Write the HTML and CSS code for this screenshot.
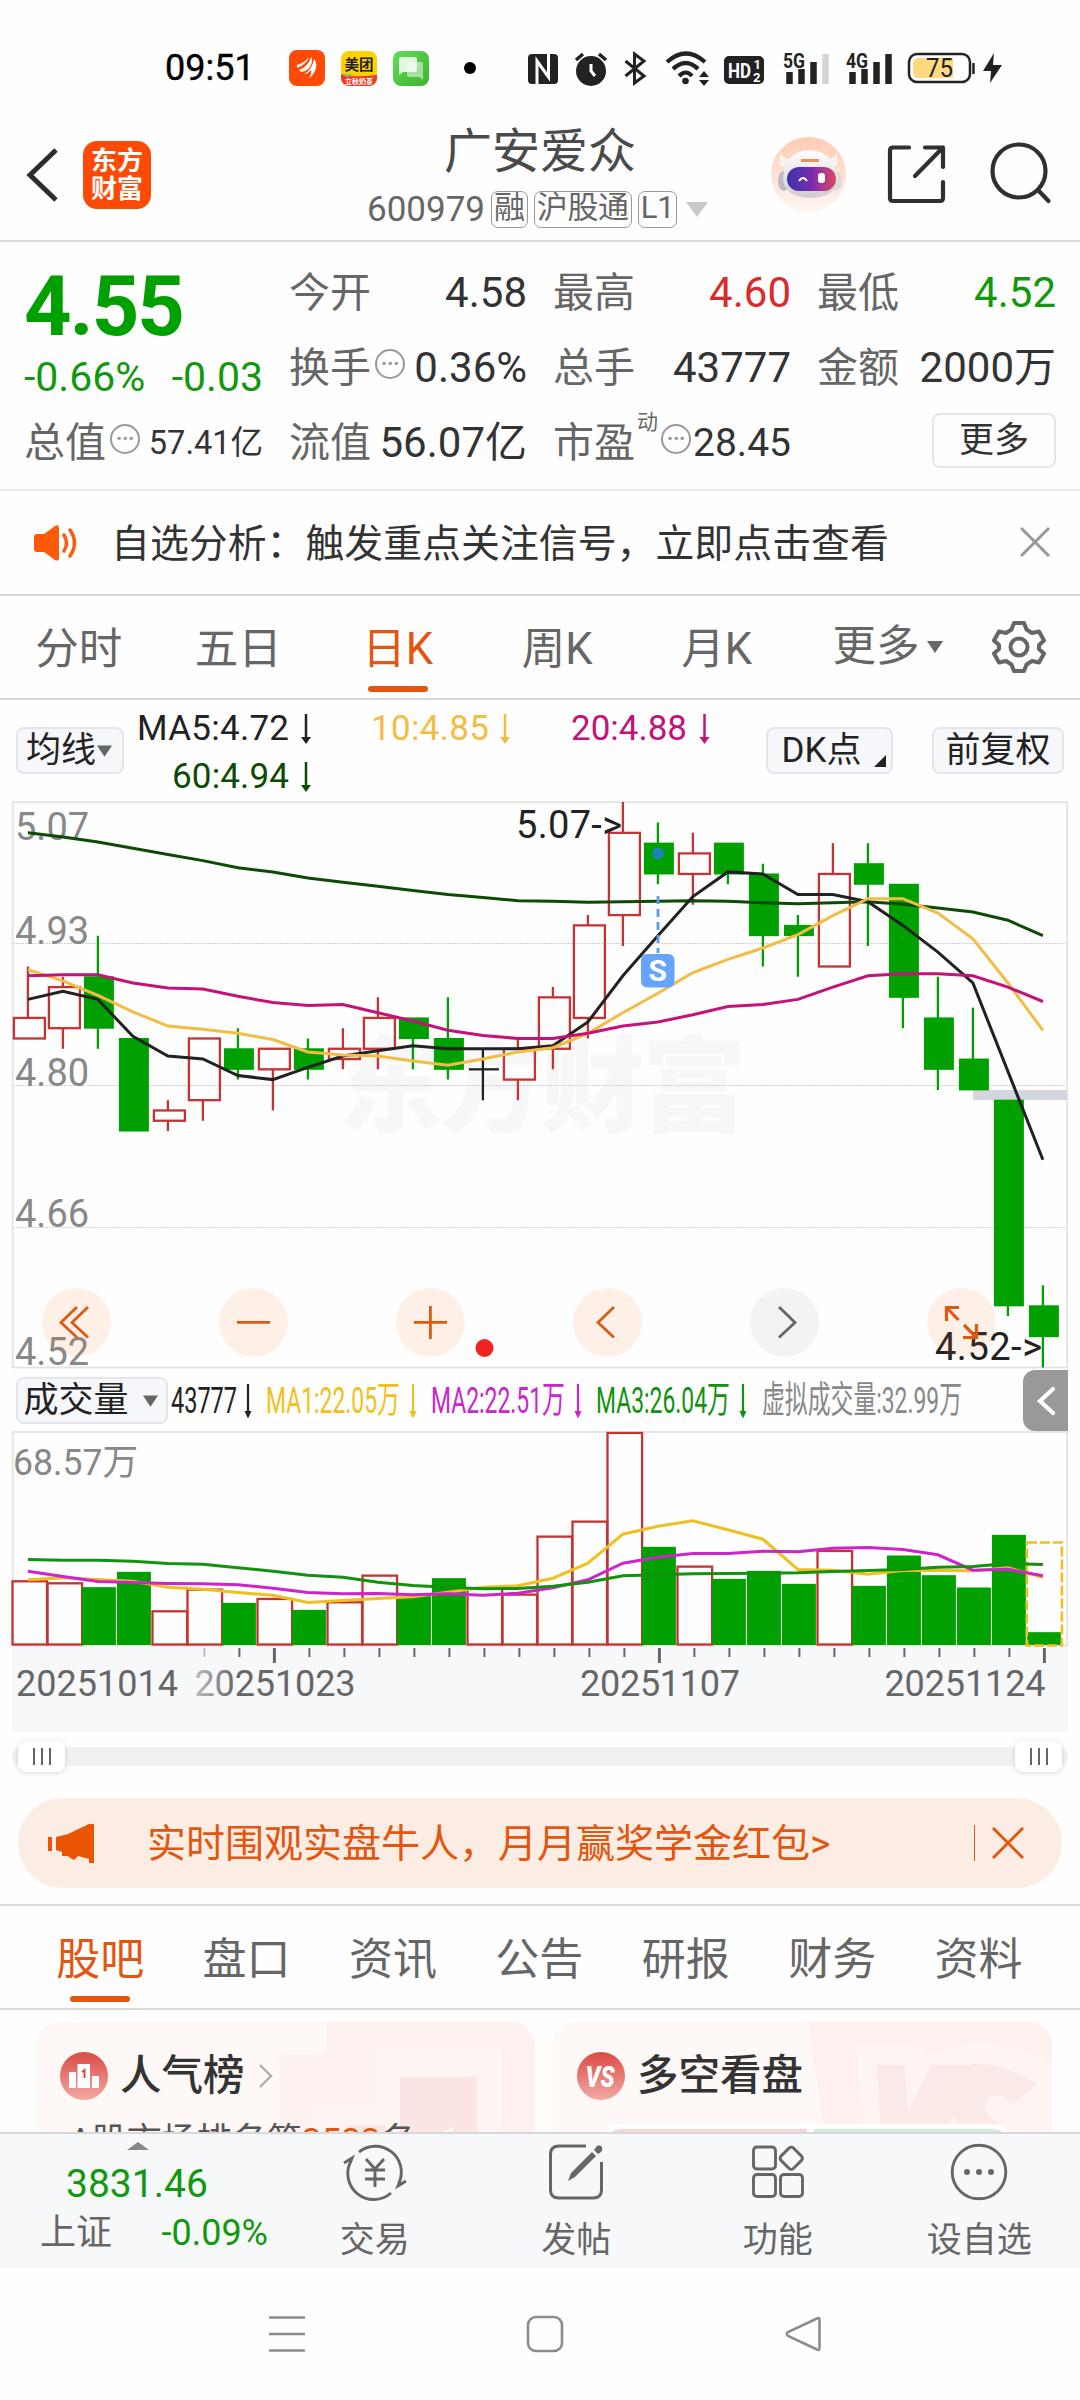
FILE: index.html
```html
<!DOCTYPE html>
<html lang="zh-CN">
<head>
<meta charset="utf-8">
<title>广安爱众 600979</title>
<link rel="stylesheet" href="styles.css">
</head>
<body>
<div class="phone">

<header class="status">
  <span class="clock">09:51</span>
  <svg class="app" viewBox="0 0 36 36"><rect width="36" height="36" rx="8" fill="#ff4a05"/><path d="M8 15Q15 13 20 7Q18 14 8 18ZM10 20Q19 17 22 7Q24 10 22 15Q19 21 12 22ZM15 24Q23 20 25 9Q29 14 26 21Q23 27 20 28Q23 23 22 20Q19 24 15 24Z" fill="#fff"/></svg>
  <svg class="app" viewBox="0 0 36 36"><defs><clipPath id="mt"><rect y="1" width="36" height="35" rx="8"/></clipPath></defs><g clip-path="url(#mt)"><rect width="36" height="36" fill="#ffd100"/><path d="M0 24Q10 28 36 25V36H0Z" fill="#ee3a2a"/><path d="M0 24L14 24L6 27Z" fill="#8fc06a"/></g><text x="18" y="20" class="mt-name">美团</text><text x="18" y="34" class="mt-sub">立秋奶茶</text></svg>
  <svg class="app" viewBox="0 0 36 36"><defs><linearGradient id="msg" x2="1" y2="1"><stop stop-color="#62dc5a"/><stop offset="1" stop-color="#3db22c"/></linearGradient></defs><rect y="1" width="36" height="35" rx="8" fill="url(#msg)"/><path d="M16 12H28Q30 12 30 14V30L26 27H16Q14 27 14 25V14Q14 12 16 12Z" fill="#fff" opacity=".5"/><path d="M8 7H22Q24 7 24 9V19Q24 22 22 22H10L6 25V9Q6 7 8 7Z" fill="#fff" opacity=".82"/></svg>
  <i class="dot"></i>
  <svg class="signals" viewBox="520 48 490 42">
    <rect x="528" y="54" width="30" height="30" rx="4" fill="#222"/>
    <path d="M537 84V61L548.500 77V54" fill="none" stroke="#fff" stroke-width="3"/>
    <circle cx="591" cy="71" r="15" fill="#222"/><path d="M576 60L583 54M599 54L606 60" stroke="#222" stroke-width="3.500"/><path d="M591 64V71L595 76" fill="none" stroke="#fff" stroke-width="3"/>
    <path d="M625.500 61L644 76L634.500 83V54L644 61L625.500 76" fill="none" stroke="#222" stroke-width="3"/>
    <path d="M667 62Q686 45 705 62M673 69Q686 57 698 69M679 76Q686 69 692 76" fill="none" stroke="#222" stroke-width="4.200"/><circle cx="685.500" cy="81" r="3.300" fill="#222"/>
    <path d="M699 77L704 71L709 77ZM699 80H709L704 86Z" fill="#222"/>
    <rect x="724" y="56" width="40" height="28" rx="5" fill="#222"/>
    <text x="728" y="78" class="hd" textLength="23" lengthAdjust="spacingAndGlyphs">HD</text><text x="753.500" y="69" class="hd-s">1</text><text x="753" y="81.500" class="hd-s">2</text>
    <text x="783" y="67.500" class="net" textLength="22" lengthAdjust="spacingAndGlyphs">5G</text>
    <path d="M789.500 72V84M801.500 69V84M813.500 62V84" stroke="#222" stroke-width="6.500"/><path d="M825.500 54V84" stroke="#d4d4d4" stroke-width="6.500"/>
    <text x="846" y="67.500" class="net" textLength="22" lengthAdjust="spacingAndGlyphs">4G</text>
    <path d="M852.500 72V84M864.500 69V84M876.500 62V84M888.500 54V84" stroke="#222" stroke-width="6.500"/>
    <rect x="909" y="54" width="61" height="28" rx="8" fill="#fff" stroke="#222" stroke-width="2.500"/><path d="M919 58H953V78H919Q913 78 913 72V64Q913 58 919 58Z" fill="#ffd980"/><path d="M973.500 63V74" stroke="#222" stroke-width="2.500"/>
    <text x="926" y="76.500" class="batt" textLength="27" lengthAdjust="spacingAndGlyphs">75</text>
    <path d="M994 53L983 71H991L990 83L1002 65H993Z" fill="#222"/>
  </svg>
</header>

<section class="title-bar">
  <svg class="back" viewBox="0 0 36 60"><path d="M32 5L6 30L32 55" fill="none" stroke="#2d2d2d" stroke-width="5"/></svg>
  <div class="logo">东方<br>财富</div>
  <div class="stock">
    <h1>广安爱众</h1>
    <p><span class="code">600979</span><b>融</b><b>沪股通</b><b>L1</b><svg class="tri" viewBox="0 0 22 15"><path d="M0 0H22L11 15Z" fill="#c8c8c8"/></svg></p>
  </div>
  <svg class="tools" viewBox="765 130 290 90">
    <defs>
      <linearGradient id="halo" x2="0" y2="1"><stop stop-color="#fdccb3"/><stop offset="1" stop-color="#fff6f2"/></linearGradient>
      <linearGradient id="visor"><stop stop-color="#3b35a8"/><stop offset=".5" stop-color="#7a2bb0"/><stop offset="1" stop-color="#e0485f"/></linearGradient>
      <linearGradient id="shell" x2="0" y2="1"><stop stop-color="#fff"/><stop offset="1" stop-color="#cfccd1"/></linearGradient>
    </defs>
    <circle cx="808.500" cy="174.500" r="37.500" fill="url(#halo)"/>
    <path d="M781 153Q776 167 788 168L797 157Q784 162 781 153ZM836 153Q841 167 830 168L821 157Q834 162 836 153Z" fill="#f8f3f1"/>
    <ellipse cx="784" cy="181" rx="6" ry="10" fill="#bdb9be"/><ellipse cx="836" cy="181" rx="6" ry="10" fill="#dedade"/>
    <path d="M809 150Q834 151 838 178Q838 197 809 198Q783 196 783 178Q785 151 809 150Z" fill="url(#shell)"/>
    <path d="M801 160.500H819" stroke="#e8935d" stroke-width="3"/>
    <rect x="787" y="167" width="49" height="24" rx="12" fill="url(#visor)"/>
    <path d="M799 181Q803 175 807 181" fill="none" stroke="#fff" stroke-width="2"/><rect x="818" y="173" width="7" height="10" rx="3" fill="#fff"/>
    <g fill="none" stroke="#303030" stroke-width="4.200" stroke-linecap="round" stroke-linejoin="round">
      <path d="M909 147.500H893Q890 147.500 890 150.500V198Q890 201 893 201H940Q943 201 943 198V182M925 147.500H943V167M943 147.500L915 176"/>
      <circle cx="1019" cy="171" r="26.500"/><path d="M1038 190L1048.500 201"/>
    </g>
  </svg>
</section>

<section class="quote">
  <div class="col first">
    <strong>4.55</strong>
    <div class="row chg"><span>-0.66%</span><span>-0.03</span></div>
    <div class="row"><label>总值</label><i class="info">···</i><em class="small">57.41亿</em></div>
  </div>
  <div class="col">
    <div class="row"><label>今开</label><em>4.58</em></div>
    <div class="row"><label>换手</label><i class="info">···</i><em>0.36%</em></div>
    <div class="row"><label>流值</label><em>56.07亿</em></div>
  </div>
  <div class="col">
    <div class="row"><label>最高</label><em class="up">4.60</em></div>
    <div class="row"><label>总手</label><em>43777</em></div>
    <div class="row"><label>市盈</label><sup>动</sup><i class="info">···</i><em class="pe">28.45</em></div>
  </div>
  <div class="col">
    <div class="row"><label>最低</label><em class="down">4.52</em></div>
    <div class="row"><label>金额</label><em>2000万</em></div>
    <div class="row"><button class="more">更多</button></div>
  </div>
</section>

<section class="notice">
  <svg class="horn" viewBox="0 0 46 38"><path d="M1 13Q1 10 4 10H11L22 2Q26 0 26 4V34Q26 38 22 36L11 28H4Q1 28 1 25Z" fill="#ff5a0a"/><path d="M31 11Q36 19 31 27M37 6Q46 19 37 32" fill="none" stroke="#ff5a0a" stroke-width="3.500" stroke-linecap="round"/></svg>
  <span>自选分析：触发重点关注信号，立即点击查看</span>
  <svg class="x" viewBox="0 0 30 30"><path d="M1 1L29 29M29 1L1 29" stroke="#999" stroke-width="3"/></svg>
</section>

<nav class="periods">
  <a>分时</a><a>五日</a><a class="on">日K</a><a>周K</a><a>月K</a>
  <a class="pm">更多<svg class="tri-s" viewBox="0 0 16 12"><path d="M0 0H16L8 12Z" fill="#666"/></svg></a>
  <svg class="gear" viewBox="-27 -27 54 54"><path d="M-5 -24H5L7.500 -17.500L13 -14L20 -15.500L25 -6.500L20 -2V2L25 6.500L20 15.500L13 14L7.500 17.500L5 24H-5L-7.500 17.500L-13 14L-20 15.500L-25 6.500L-20 2V-2L-25 -6.500L-20 -15.500L-13 -14L-7.500 -17.500Z" fill="none" stroke="#666" stroke-width="4" stroke-linejoin="round"/><circle r="8.500" fill="none" stroke="#666" stroke-width="4"/></svg>
</nav>

<section class="ma-bar">
  <button class="chip avg">均线<svg class="tri-s" viewBox="0 0 16 12"><path d="M0 0H16L8 12Z" fill="#666"/></svg></button>
  <svg class="ma-legend" viewBox="130 700 620 100">
    <g class="ma-text">
      <text x="137" y="739" textLength="152" fill="#222">MA5:4.72</text><text x="371" y="739" textLength="118" fill="#f3bd45">10:4.85</text><text x="571" y="739" textLength="116" fill="#c4127a">20:4.88</text><text x="172" y="787" textLength="117" fill="#0c4a05">60:4.94</text>
    </g>
    <g stroke-width="2.500"><path d="M306 713V740" stroke="#222"/><path d="M505 713V740" stroke="#f3bd45"/><path d="M704.500 713V740" stroke="#c4127a"/><path d="M306 761V788" stroke="#0c4a05"/></g>
    <path d="M301 736H311L306 743Z" fill="#222"/><path d="M500 736H510L505 743Z" fill="#f3bd45"/><path d="M699.500 736H709.500L704.500 743Z" fill="#c4127a"/><path d="M301 784H311L306 791Z" fill="#0c4a05"/>
  </svg>
  <button class="chip dk">DK点<svg class="corner" viewBox="0 0 12 12"><path d="M12 0V12H0Z" fill="#222"/></svg></button>
  <button class="chip adj">前复权</button>
</section>

<svg class="kline" viewBox="0 801 1080 568">
  <text x="542" y="1124" class="watermark" textLength="408">东方财富</text>
  <path d="M13 943.500H1067M13 1085.500H1067M13 1227.500H1067" stroke="#d0d0d0" stroke-width="1" stroke-dasharray="2 1"/>
  <rect x="12.700" y="802.200" width="1054.500" height="565.300" fill="none" stroke="#e3e3e3" stroke-width="1.800"/>
  <g class="price">
    <text x="15" y="839.500">5.07</text><text x="15" y="943.500">4.93</text><text x="15" y="1085.500">4.80</text><text x="15" y="1227">4.66</text><text x="15" y="1364.500">4.52</text>
  </g>
  <rect x="973" y="1090" width="94" height="10" fill="#d3d6dc"/>
  <g id="candles"></g>
  <g id="averages" fill="none" stroke-width="3"></g>
  <circle cx="658" cy="853.500" r="6" fill="#1a85b5"/>
  <path d="M658 896V953" stroke="#5b9ce8" stroke-width="2.800" stroke-dasharray="8 5"/>
  <rect x="641" y="954" width="33.500" height="33.500" rx="6" fill="#66a4ff"/><text x="657.800" y="981" class="sell">S</text>
  <text x="516" y="838" class="mark" textLength="106">5.07-&gt;</text><text x="935" y="1360" class="mark" textLength="107">4.52-&gt;</text>
  <g fill="#ff6a1a" fill-opacity=".1"><circle cx="76.400" cy="1322.400" r="34.400"/><circle cx="253.400" cy="1322.400" r="34.400"/><circle cx="430.400" cy="1322.400" r="34.400"/><circle cx="607.500" cy="1322.400" r="34.400"/><circle cx="961.500" cy="1322.400" r="34.400"/></g>
  <circle cx="784.500" cy="1322.400" r="34.400" fill="#f3f3f3"/>
  <g fill="none" stroke="#dd5a12" stroke-width="2.800"><path d="M77 1307L61 1322.400L77 1337.500M88 1307L72 1322.400L88 1337.500M237 1322.400H270M414 1322.400H447M430.400 1306V1339M614 1307L598 1322.400L614 1337.500"/><path d="M959 1307.500H946.500V1321M947 1308L958.500 1320M963 1337.500H976.500V1324M964 1325L976 1337" stroke-width="3.200"/><path d="M779 1307L795 1322.400L779 1337.500" stroke="#666"/></g>
  <circle cx="484.500" cy="1348" r="9" fill="#f22323"/>
</svg>

<section class="vol-bar">
  <button class="chip">成交量<svg class="tri-s" viewBox="0 0 16 12"><path d="M0 0H16L8 12Z" fill="#666"/></svg></button>
  <svg class="vol-legend" viewBox="168 1369 855 62">
    <g class="vol-text">
      <text x="171" y="1413" textLength="66" lengthAdjust="spacingAndGlyphs" fill="#222">43777</text>
      <text x="266" y="1413" textLength="134" lengthAdjust="spacingAndGlyphs" fill="#f0c020">MA1:22.05万</text>
      <text x="431" y="1413" textLength="134" lengthAdjust="spacingAndGlyphs" fill="#cc25cc">MA2:22.51万</text>
      <text x="596" y="1413" textLength="134" lengthAdjust="spacingAndGlyphs" fill="#12920f">MA3:26.04万</text>
      <text x="762" y="1413" textLength="200" lengthAdjust="spacingAndGlyphs" fill="#888">虚拟成交量:32.99万</text>
    </g>
    <g stroke-width="2.200"><path d="M248 1384V1416" stroke="#222"/><path d="M413 1384V1416" stroke="#f0c020"/><path d="M578 1384V1416" stroke="#cc25cc"/><path d="M743 1384V1416" stroke="#12920f"/></g>
    <path d="M244.500 1411H251.500L248 1418.500Z" fill="#222"/><path d="M409.500 1411H416.500L413 1418.500Z" fill="#f0c020"/><path d="M574.500 1411H581.500L578 1418.500Z" fill="#cc25cc"/><path d="M739.500 1411H746.500L743 1418.500Z" fill="#12920f"/>
  </svg>
  <div class="drawer"><svg viewBox="0 0 20 30"><path d="M17 3L4 15L17 27" fill="none" stroke="#fff" stroke-width="4.200" stroke-linecap="round"/></svg></div>
</section>

<svg class="volume" viewBox="0 1431 1080 302">
  <defs><linearGradient id="fade" gradientUnits="userSpaceOnUse" x1="196" x2="236"><stop stop-color="#bbb"/><stop offset="1" stop-color="#666"/></linearGradient></defs>
  <rect x="12" y="1646" width="1056" height="86" fill="#f7f8fa"/>
  <rect x="12.700" y="1432" width="1054.500" height="213.500" fill="none" stroke="#e3e3e3" stroke-width="1.800"/>
  <text x="13" y="1475" class="vol-max" textLength="125" lengthAdjust="spacingAndGlyphs">68.57万</text>
  <g id="bars"></g>
  <g id="volAverages" fill="none" stroke-width="3"></g>
  <g id="ticks" stroke="#666"></g>
  <g class="dates"><text x="16" y="1696" textLength="162">20251014</text><text x="194.500" y="1696" textLength="161" fill="url(#fade)">20251023</text><text x="580" y="1696" textLength="160">20251107</text><text x="884.500" y="1696" textLength="161">20251124</text></g>
</svg>

<div class="range"><div class="track"><i class="grip"></i><i class="grip"></i></div></div>

<div class="promo">
  <svg class="mega" viewBox="0 0 46 40"><path d="M0 14H4V28H0ZM8 14L20 11L41 1H46V40H41V36L30 33L26 37L22 35L20 33H14V29L8 27Z" fill="#ea5504"/></svg>
  <span>实时围观实盘牛人，月月赢奖学金红包&gt;</span>
  <i></i>
  <svg class="x" viewBox="0 0 32 32"><path d="M1 1L31 31M31 1L1 31" stroke="#e2560f" stroke-width="3"/></svg>
</div>

<nav class="topics"><a class="on">股吧</a><a>盘口</a><a>资讯</a><a>公告</a><a>研报</a><a>财务</a><a>资料</a></nav>

<section class="cards">
  <article>
    <svg class="art" viewBox="0 0 499 120"><path d="M290 0H499V120H243V32H290Z" fill="#fdf2f0"/><path d="M340 25H465V120H275V83H340Z" fill="#fdf5f3"/><rect x="310" y="103" width="40" height="17" fill="#fbe8e6"/><rect x="364" y="55" width="77" height="65" fill="#fbe5e3"/><path d="M400 113L418 104V120H400Z" fill="#fdf4f2"/></svg>
    <h2><svg class="badge" viewBox="0 0 48 48"><defs><linearGradient id="rd" x2="0" y2="1"><stop stop-color="#dc4a44"/><stop offset="1" stop-color="#f2a9a4"/></linearGradient></defs><circle cx="24" cy="24" r="24" fill="url(#rd)"/><path d="M9 20H16V36H9ZM17.500 12H30V36H17.500ZM32 24H39V36H32Z" fill="#fff"/><path d="M22 20L24.500 18V26" fill="none" stroke="#dc4a44" stroke-width="2"/></svg>人气榜<svg class="go" viewBox="0 0 14 24"><path d="M1 1L12 12L1 23" fill="none" stroke="#aaa" stroke-width="2.200"/></svg></h2>
    <p>A股市场排名第<b>3533</b>名</p>
  </article>
  <article>
    <svg class="art" viewBox="0 0 499 120"><path d="M256 0H499V120H272Z" fill="#fdf0ee"/><path d="M302 23H364L377 35Q420 5 499 40V120H312Z" fill="#fef4f2"/><path d="M324 43H352L355 90L378 43H415Q440 36 485 62L460 82Q445 68 433 78Q426 88 445 102L455 120H413L400 93L388 120H328Z" fill="#fbe9e7"/></svg>
    <h2><svg class="badge" viewBox="0 0 48 48"><circle cx="24" cy="24" r="24" fill="url(#rd)"/><text x="23" y="35" class="vs" textLength="29" lengthAdjust="spacingAndGlyphs">VS</text></svg>多空看盘</h2>
    <div class="split"><i></i><i></i></div>
  </article>
</section>

<footer class="dock">
  <div class="index"><svg viewBox="0 0 22 8"><path d="M11 0L22 8H0Z" fill="#888"/></svg><strong>3831.46</strong><p><span>上证</span><b>-0.09%</b></p></div>
  <a><svg viewBox="-32 -32 64 64"><g fill="none" stroke="#666" stroke-width="2.900"><path d="M-16 -20A26 26 0 0 1 24 11L23 14M31 9L23 14L25 9M16 21A26 26 0 0 1 -24 -11L-23 -14M-31 -9L-23 -14L-25 -9"/><path d="M-9 -13L0 -3L9 -13M0 -3V15M-10 -2H10M-10 7H10"/></g></svg>交易</a>
  <a><svg viewBox="-32 -32 64 64"><path d="M10 -26H-17Q-25.500 -26 -25.500 -18V18Q-25.500 26 -17 26H17Q25.500 26 25.500 18V-10" fill="none" stroke="#666" stroke-width="3"/><path d="M-8 9L-5 1L16 -20L20 -16L-1 5ZM18 -22L21 -26Q24 -28 26 -25Q27 -22 25 -20L22 -18Z" fill="#666"/></svg>发帖</a>
  <a><svg viewBox="-32 -32 64 64"><g fill="none" stroke="#666" stroke-width="2.900"><rect x="-24.500" y="-25" width="22" height="22" rx="3.500"/><rect x="-24.500" y="2.500" width="22" height="22" rx="3.500"/><rect x="2.500" y="2.500" width="22" height="22" rx="3.500"/><rect x="4.500" y="-22.500" width="17.500" height="17.500" rx="3" transform="rotate(45 13.250 -13.750)"/></g></svg>功能</a>
  <a><svg viewBox="-32 -32 64 64"><circle r="26.800" fill="none" stroke="#666" stroke-width="2.900"/><circle cx="-12" r="3" fill="#666"/><circle r="3" fill="#666"/><circle cx="12" r="3" fill="#666"/></svg>设自选</a>
</footer>

<div class="sysnav">
  <svg viewBox="260 2300 570 70" fill="none" stroke="#8c8c8c" stroke-width="2.600"><path d="M269 2317.500H305M269 2334H305M269 2350.500H305"/><rect x="528" y="2317" width="34" height="34" rx="8"/><path d="M817 2318.500Q819.500 2317 819.500 2320V2348Q819.500 2351 817 2349.500L788 2336Q785.500 2334 788 2332Z"/></svg>
</div>

</div>
<script src="chart.js"></script>
</body>
</html>
```
FILE: styles.css
```css
* { box-sizing: border-box; margin: 0; padding: 0; }
body { font-family: Roboto, "Noto Sans CJK SC", sans-serif; color: #222; background: #fefefe; }
button { font: inherit; color: inherit; background: none; border: 0; }
i, em { font-style: normal; }
svg { display: block; flex: none; }
.phone { width: 1080px; height: 2400px; display: flex; flex-direction: column; overflow: hidden; }
.phone > * { flex: none; }

.status { height: 105px; padding: 31px 0 0 165px; display: flex; align-items: center; }
.clock { width: 124px; font-size: 36px; line-height: 42px; color: #000; -webkit-text-stroke: .4px #000; }
.app { width: 36px; height: 36px; margin-right: 16px; }
.mt-name { font: 700 14.500px "Noto Sans CJK SC", sans-serif; text-anchor: middle; fill: #222; }
.mt-sub { font: 700 7px "Noto Sans CJK SC", sans-serif; text-anchor: middle; fill: #fff; }
.dot { width: 12px; height: 12px; border-radius: 50%; background: #000; margin: 0 44px 0 19px; }
.signals { width: 490px; height: 42px; margin-top: 2px; }
.hd { font: 700 21px Roboto, sans-serif; fill: #fff; }
.hd-s { font: 700 13px Roboto, sans-serif; fill: #fff; }
.net { font: 700 20px Roboto, sans-serif; fill: #222; }
.batt { font: 400 25px Roboto, sans-serif; fill: #222; }

.title-bar { height: 137px; border-bottom: 2px solid #d8d8d8; display: flex; align-items: flex-start; }
.back { width: 36px; height: 60px; margin: 40px 0 0 24px; }
.logo { width: 68px; height: 68px; margin: 36px 0 0 23px; padding-top: 6px; border-radius: 14px; background: #ff4a05; color: #fff; font-size: 26px; font-weight: 700; line-height: 28px; text-align: center; }
.stock { margin-left: 216px; width: 398px; }
.stock h1 { font-size: 48px; font-weight: 400; line-height: 56px; color: #4a4a4a; margin: 19px 0 0 77px; }
.stock p { display: flex; align-items: center; height: 38px; margin-top: 10px; color: #666; }
.code { font-size: 35px; width: 124px; }
.stock b { font-weight: 400; font-size: 31px; line-height: 32px; height: 37px; padding: 0 2px; margin-right: 6px; border: 1.500px solid #999; border-radius: 7px; letter-spacing: -.3px; }
.stock .tri { width: 22px; height: 15px; margin-left: 3px; }
.tools { width: 290px; height: 90px; margin-top: 25px; }

.quote { height: 249px; border-bottom: 2px solid #ececec; display: grid; grid-template-columns: 239px 238px 238px 239px; column-gap: 26px; padding-left: 24px; color: #333; }
.col { display: grid; grid-template-rows: 75px 75px 75px; padding-top: 13px; }
.first { grid-template-rows: 93px 57px 75px; }
.first strong { font-size: 83px; line-height: 103px; font-weight: 700; color: #00a000; letter-spacing: -2px; }
.row.chg { color: #12980f; font-size: 41px; justify-content: space-between; }
.row { display: flex; align-items: center; font-size: 41px; line-height: 60px; white-space: nowrap; }
.row label { color: #666; }
.row em { margin-left: auto; font-size: 42px; }
.row .small { font-size: 32.500px; }
.row .pe { font-size: 39px; }
.row sup { color: #666; font-size: 21px; line-height: 24px; align-self: flex-start; margin: 5px 1px 0 2px; }
.row em.up { color: #d92b2b; } .row em.down { color: #12980f; }
.info { width: 30px; height: 30px; margin: -8px 0 0 4px; border: 2.500px solid #999; border-radius: 50%; color: #999; font-size: 22px; line-height: 26px; font-weight: 700; text-align: center; letter-spacing: -.5px; }
.row sup + .info { margin-left: 2px; }
.more { width: 124px; height: 55px; border: 2px solid #e6e6e6; border-radius: 8px; margin: -4px 0 0 115px; font-size: 35px; line-height: 50px; }

.notice { height: 105px; border-bottom: 2px solid #d8d8d8; display: flex; align-items: center; font-size: 38.900px; color: #333; padding-left: 33px; }
.notice span { margin: -6px 0 0 -1px; }
.horn { width: 46px; height: 38px; margin-right: 33px; }
.notice .x { width: 30px; height: 30px; margin: -1px 0 0 131px; }

.periods { height: 104px; border-bottom: 2px solid #d8d8d8; display: flex; align-items: center; font-size: 43.500px; color: #666; }
.periods a { width: 159.500px; height: 100%; line-height: 108px; text-align: center; white-space: nowrap; margin-left: -1px; margin-right: 1px; }
.on { color: #e2560f; position: relative; }
.on::after { content: ""; position: absolute; left: 50%; width: 60px; height: 6px; margin-left: -30px; border-radius: 3px; background: #e2560f; top: 90px; }
.periods .pm { width: 120px; margin-left: 35px; text-align: left; display: flex; align-items: center; }
.tri-s { width: 16px; height: 12px; margin-left: 7px; }
.gear { width: 54px; height: 54px; margin-left: 38px; }

.ma-bar { height: 101px; padding: 0 16px; display: flex; align-items: flex-start; }
.chip { height: 47px; margin-top: 27px; border: 2px solid #e3e5ea; border-radius: 8px; background: #f6f7fa; font-size: 35px; line-height: 42px; display: flex; align-items: center; justify-content: center; flex: none; white-space: nowrap; }
.avg { width: 108px; padding-right: 2px; } .avg .tri-s { width: 15px; margin-left: 1px; }
.ma-legend { width: 620px; height: 100px; margin: 1px 16px 0 6px; }
.ma-text { font-size: 35px; }
.dk { width: 127px; position: relative; padding-right: 16px; }
.corner { position: absolute; right: 5px; bottom: 5px; width: 12px; height: 12px; }
.adj { width: 132px; margin-left: auto; }

.kline { width: 1080px; height: 568px; }
.price, .mark { font-size: 38px; }
.price { fill: #888; }
.mark { fill: #222; }
.watermark { font-family: "Noto Sans CJK SC", sans-serif; font-weight: 900; font-size: 104px; text-anchor: middle; fill: #f7f7f7; }
.sell { font-size: 30px; font-weight: 700; text-anchor: middle; fill: #fff; }

.vol-bar { height: 62px; display: flex; padding-left: 16px; }
.vol-bar .chip { width: 152px; margin-top: 8px; padding-right: 3px; }
.vol-bar .tri-s { width: 15px; margin-left: 14px; }
.vol-legend { width: 855px; height: 62px; }
.vol-text { font-size: 37px; }
.drawer { width: 45px; height: 61px; margin-top: 1px; border-radius: 12px 0 0 12px; background: #999; display: flex; align-items: center; justify-content: center; }
.drawer svg { width: 20px; height: 30px; }
.volume { width: 1080px; height: 302px; }
.vol-max { font-size: 36px; fill: #888; }
.dates { font-size: 36px; fill: #666; }

.range { height: 65px; padding: 14px 12px 0; }
.track { height: 19px; border-radius: 9px; background: #f0f0f3; display: flex; align-items: center; justify-content: space-between; padding: 0 6px; }
.grip { width: 47px; height: 31px; border-radius: 8px; background: linear-gradient(#666, #666) 15px 7px/2px 17px no-repeat, linear-gradient(#666, #666) 23px 7px/2px 17px no-repeat, linear-gradient(#666, #666) 31px 7px/2px 17px no-repeat, #fff; box-shadow: 0 1px 5px rgba(0, 0, 0, .15); }

.promo { height: 90px; margin: 0 18px 16px; border-radius: 45px; background: #fcede4; color: #e2560f; font-size: 39px; display: flex; align-items: center; padding: 0 38px 0 30px; }
.promo span { margin: -6px 0 0 -1px; }
.mega { width: 46px; height: 40px; margin-right: 54px; }
.promo i { width: 1.500px; height: 36px; background: #e2560f; margin: 0 17px 0 auto; }
.promo .x { width: 32px; height: 32px; }

.topics { height: 106px; border-top: 2px solid #d8d8d8; border-bottom: 2px solid #d8d8d8; display: grid; grid-template-columns: repeat(7, 146.400px); padding-left: 27px; font-size: 44px; line-height: 108px; color: #666; text-align: center; }

.cards { height: 122px; overflow: hidden; display: flex; gap: 18px; padding: 12px 28px 0 36px; }
.cards article { width: 499px; height: 160px; border-radius: 24px; background: #fef8f6; position: relative; overflow: hidden; }
.art { position: absolute; left: 0; top: 0; width: 499px; height: 120px; }
.cards h2 { position: relative; display: flex; align-items: center; height: 107px; padding-left: 24px; font-size: 41.500px; line-height: 48px; font-weight: 500; color: #333; }
.badge { width: 48px; height: 48px; margin-right: 12px; }
.go { width: 14px; height: 24px; margin-left: 14px; }
.vs { font: italic 900 29px Roboto, sans-serif; fill: #fff; text-anchor: middle; }
.cards p { position: relative; font-size: 35px; line-height: 40px; margin: -7px 0 0 33px; color: #555; }
.cards p b { font-weight: 400; color: #e2560f; }
.split { position: relative; display: flex; gap: 7px; width: 420px; height: 50px; margin: -5px 0 0 44px; border: 5px solid #fff; border-radius: 26px; background: #fff; overflow: hidden; }
.split i:first-child { width: 205px; background: #f6d6d4; }
.split i:last-child { flex: 1; background: #d5ecda; }

.dock { height: 136px; border-top: 2px solid #d8d8d8; background: #f7f8fa; display: flex; color: #666; }
.index { width: 274px; }
.index svg { width: 22px; height: 8px; margin: 8px 0 0 127px; }
.index strong { display: block; font-weight: 400; font-size: 39px; line-height: 46px; color: #12980f; margin: 11px 0 0 66px; }
.index p { display: flex; justify-content: space-between; margin: 6px 6px 0 40px; font-size: 36px; line-height: 40px; }
.index b { font-weight: 400; color: #12980f; }
.dock a { width: 201.500px; font-size: 35px; line-height: 48px; text-align: center; }
.dock a svg { width: 64px; height: 64px; margin: 6px auto 13px; }

.sysnav { height: 132px; background: #fefefe; padding: 32px 0 0 260px; }
.sysnav svg { width: 570px; height: 70px; }
```
FILE: chart.js
```js
const STEP = 35, X0 = 27.9, TOP = 802, TICK = 10.282;
const GREEN = '#00a000', RED = '#c43432';
const cx = i => X0 + STEP * i;
const py = t => TOP + t * TICK;

// [body top, body bottom, high, low, up/down/flat], in cents below the 5.07 high
const candles = [
  [21,23,16,23,'u'],[18,22,17,24,'u'],[17,22,13,24,'d'],[23,32,23,32,'d'],[30,31,29,32,'u'],[23,29,23,31,'u'],
  [24,26,22,27,'d'],[24,26,24,30,'u'],[24,26,23,27,'d'],[24,25,22,26,'u'],[21,24,19,26,'u'],[21,23,21,26,'d'],
  [23,26,19,27,'d'],[26,26,24,29,'f'],[24,27,23,29,'u'],[19,24,18,26,'u'],[12,21,11,23,'u'],[3,11,0,14,'u'],
  [4,7,2,8,'d'],[5,7,3,10,'u'],[4,7,4,8,'d'],[7,13,6,16,'d'],[12,13,11,17,'d'],[7,16,4,16,'u'],[6,8,4,14,'d'],
  [8,19,8,22,'d'],[21,26,17,28,'d'],[25,28,20,28,'d'],[29,49,29,50,'d'],[49,52,47,55,'d']
];
let out = '';
candles.forEach(([t, b, h, l, k], i) => {
  const x = cx(i), c = k === 'u' ? RED : k === 'd' ? GREEN : '#222';
  out += `<path d="M${x} ${py(h)}V${py(t)}M${x} ${py(b)}V${py(l)}" stroke="${c}" stroke-width="2.3"/>`;
  if (k === 'u') out += `<rect x="${x - 14}" y="${py(t)}" width="31" height="${py(b) - py(t)}" fill="none" stroke="${c}" stroke-width="2.3"/>`;
  else if (k === 'd') out += `<rect x="${x - 14}" y="${py(t) - .5}" width="30" height="${py(b) - py(t) + 1}" fill="${c}"/>`;
  else out += `<path d="M${x - 14} ${py(t)}H${x + 16}" stroke="${c}" stroke-width="2.3"/>`;
});
document.getElementById('candles').innerHTML = out;

const line = (ys, c) => `<polyline stroke="${c}" points="${ys.map((y, i) => cx(i) + ',' + y.toFixed(1)).join(' ')}"/>`;
const averages = [
  ['#0c4a05', [3,3.4,3.9,4.5,5.1,5.7,6.4,6.8,7.4,7.8,8.2,8.6,9,9.3,9.6,9.65,9.75,9.7,9.65,9.6,9.65,9.8,9.9,9.8,9.7,9.95,10.3,10.7,11.5,13]],
  ['#222222', [19.2,18.4,19.2,22.8,24.7,25,26.6,27,25.8,24.7,24.2,23.7,24,24,24,23.7,21.4,16.9,13,9.2,6.8,7,9,9,9.7,12,14.6,17.6,26.2,34.8]],
  ['#f3bd45', [16.3,17.4,18.8,20.4,21.8,22.1,22.5,23.1,24.3,24.6,24.7,25.2,25.6,25,24.3,23.9,22.5,20.5,18.6,16.6,15.3,14.2,12.9,11.05,9.4,9.4,10.8,13.3,17.6,22.2]],
  ['#c4127a', [16.9,16.8,16.8,17.6,18.1,18.2,18.9,19.5,19.8,19.7,20.5,21.3,22.2,22.7,23,23,22.5,21.8,21.4,20.7,19.9,19.7,19.2,18,16.9,16.7,16.7,16.9,18,19.4]]
];
document.getElementById('averages').innerHTML = averages.map(([c, v]) => line(v.map(py), c)).join('');

// volumes on a 0-640 scale, where 640 is 68.57万
const BASE = 1645.5, vy = v => BASE - v / 3;
const volumes = [195,189,175,221,105,170,128,142,107,132,212,149,202,174,155,329,374,640,296,239,200,224,185,286,179,270,211,174,332,40];
out = '';
volumes.forEach((v, i) => {
  const x = cx(i) - 16;
  out += candles[i][4] === 'd'
    ? `<rect x="${x}" y="${vy(v)}" width="34" height="${v / 3 - .5}" fill="${GREEN}"/>`
    : `<rect x="${x + .6}" y="${vy(v) + .8}" width="34.6" height="${v / 3 - 1.8}" fill="none" stroke="${RED}" stroke-width="2.3"/>`;
});
out += `<rect x="${cx(29) - 16}" y="${vy(309)}" width="35" height="103" fill="none" stroke="#eec020" stroke-width="2.6" stroke-dasharray="10 3"/>`;
document.getElementById('bars').innerHTML = out;

const volAverages = [
  ['#f0c020', [197,203,198,193,175,169,159,151,129,135,141,146,160,175,179,202,247,334,358,374,347,319,228,226,214,225,225,224,233,205]],
  ['#cc25cc', [223,207,192,189,186,185,182,172,159,155,156,152,155,151,157,173,197,247,265,276,276,283,281,292,294,288,272,226,229,209]],
  ['#12920f', [258,256,256,253,246,244,233,223,211,205,190,180,175,170,171,178,190,209,212,215,216,217,218,222,225,228,235,237,246,243]]
];
document.getElementById('volAverages').innerHTML = volAverages.map(([c, v]) => line(v.map(vy), c)).join('');

out = '';
for (let i = 5; i < 30; i++) {
  const major = i === 7 || i === 18 || i === 29;
  out += `<path d="M${cx(i) + 1.5} 1648V${major ? 1663 : 1657}" stroke-width="${major ? 3 : 2}"${i === 5 ? ' opacity=".4"' : ''}/>`;
}
document.getElementById('ticks').innerHTML = out;
```
